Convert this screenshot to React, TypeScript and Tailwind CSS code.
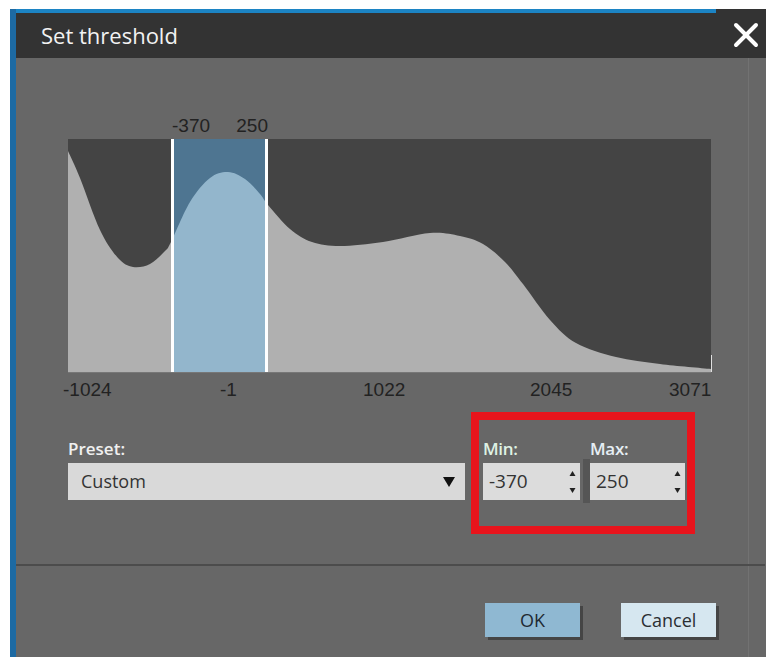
import { X } from 'lucide-react';

type Pt = [number, number];

// histogram outline, in chart pixel coordinates
const curve: Pt[] = [
  [68, 151], [80, 178], [100, 230], [118, 258], [133, 267], [150, 264], [165, 251],
  [171, 242], [190, 202], [210, 178], [228, 172], [245, 179], [260, 194], [268, 205],
  [290, 229], [312, 242], [340, 246], [383, 242], [430, 233], [460, 236], [483, 244],
  [505, 262], [523, 284], [550, 320], [576, 343], [616, 357], [660, 364], [711, 369],
];

const LEFT = 68;
const RIGHT = 711;
const TOP = 139;
const BOTTOM = 372;
const SEL_MIN = 171;
const SEL_MAX = 268;

function smoothPath(pts: Pt[]) {
  let d = `M${pts[0][0]},${pts[0][1]}`;
  for (let i = 0; i < pts.length - 1; i++) {
    const p0 = pts[i - 1] || pts[i];
    const p1 = pts[i];
    const p2 = pts[i + 1];
    const p3 = pts[i + 2] || p2;
    const c1x = p1[0] + (p2[0] - p0[0]) / 6;
    const c1y = p1[1] + (p2[1] - p0[1]) / 6;
    const c2x = p2[0] - (p3[0] - p1[0]) / 6;
    const c2y = p2[1] - (p3[1] - p1[1]) / 6;
    d += ` C${c1x},${c1y} ${c2x},${c2y} ${p2[0]},${p2[1]}`;
  }
  return d;
}

const area = `${smoothPath(curve)} L${RIGHT},${BOTTOM} L${LEFT},${BOTTOM} Z`;

const axisLabels = [
  { x: 63, text: '-1024' },
  { x: 220, text: '-1' },
  { x: 363, text: '1022' },
  { x: 530, text: '2045' },
  { x: 669, text: '3071' },
];

function Histogram() {
  return (
    <svg width={660} height={292} viewBox="60 108 660 292" className="block">
      <defs>
        <clipPath id="sel">
          <rect x={SEL_MIN} y={TOP} width={SEL_MAX - SEL_MIN} height={BOTTOM - TOP} />
        </clipPath>
      </defs>
      <rect x={LEFT} y={TOP} width={RIGHT - LEFT} height={BOTTOM - TOP} fill="#444444" />
      <path d={area} fill="#b0b0b0" />
      <rect x={SEL_MIN} y={TOP} width={SEL_MAX - SEL_MIN} height={BOTTOM - TOP} fill="#4e7591" />
      <path d={area} fill="#93b6cc" clipPath="url(#sel)" />
      <line x1={SEL_MIN + 1.5} y1={TOP} x2={SEL_MIN + 1.5} y2={BOTTOM} stroke="#ffffff" strokeWidth={3} />
      <line x1={SEL_MAX - 1.5} y1={TOP} x2={SEL_MAX - 1.5} y2={BOTTOM} stroke="#ffffff" strokeWidth={3} />
      <line x1={LEFT} y1={BOTTOM + 0.5} x2={RIGHT} y2={BOTTOM + 0.5} stroke="#777777" strokeWidth={1} />
      <line x1={RIGHT + 0.5} y1={355} x2={RIGHT + 0.5} y2={BOTTOM} stroke="#e0e0e0" strokeWidth={1} />

      <g fontFamily="'Liberation Sans', Arial, sans-serif" fontSize={19} fill="#222222">
        <text x={SEL_MIN + 1} y={132}>-370</text>
        <text x={SEL_MAX} y={132} textAnchor="end">250</text>
        {axisLabels.map(l => (
          <text key={l.text} x={l.x} y={396}>{l.text}</text>
        ))}
      </g>
    </svg>
  );
}

function Spinner() {
  return (
    <svg width={7} height={24} viewBox="0 0 7 24" className="shrink-0">
      <path d="M3.5 1 L6.5 6 L0.5 6 Z" fill="#222" />
      <path d="M0.5 18 L6.5 18 L3.5 23 Z" fill="#222" />
    </svg>
  );
}

function NumberBox({ value, width }: { value: string; width: string }) {
  return (
    <div className={`${width} h-[37px] bg-[#dcdcdc] flex items-center justify-between pl-[6px] pr-[4px]`}>
      <span className="text-[19px] text-[#333]">{value}</span>
      <Spinner />
    </div>
  );
}

export default function App() {
  return (
    <div
      className="w-[766px] h-[657px] bg-white pl-[10px] pt-[9px] overflow-hidden"
      style={{ fontFamily: "'Open Sans', 'Noto Sans', sans-serif" }}
    >
      <div className="flex h-full flex-col border-l-[6px] border-[#1d6aa3] bg-[#676767]">
        {/* title bar */}
        <div className="flex h-[49px] shrink-0">
          <div className="flex flex-1 items-center border-t-4 border-[#1c84c4] bg-[#333333] pl-[25px]">
            <span className="text-[22px] font-medium text-[#f2f2f2]">Set threshold</span>
          </div>
          <div className="w-[50px] bg-[#333333] flex items-center pl-[14px] pt-[3px]">
            <X className="w-[40px] h-[40px] -ml-[4px] text-white" strokeWidth={2.4} />
          </div>
        </div>

        {/* body */}
        <div className="flex flex-1 flex-col border-r border-[#727272] mr-[17px]">
          <div className="mt-[50px] ml-[44px]">
            <Histogram />
          </div>

          <div className="mt-[12px] ml-[52px] flex items-start">
            <div className="mt-[27px] flex flex-col">
              <span className="text-[17px] font-semibold text-[#f0f0f0] leading-[20px]">Preset:</span>
              <div className="mt-[4px] w-[397px] h-[37px] bg-[#d9d9d9] flex items-center justify-between pl-[13px] pr-[10px]">
                <span className="text-[18px] text-[#333]">Custom</span>
                <svg width={12} height={10} viewBox="0 0 12 10">
                  <path d="M0 0 L12 0 L6 10 Z" fill="#111" />
                </svg>
              </div>
            </div>

            <div className="ml-[6px] w-[224px] h-[122px] border-[8px] border-[#e8141c] pl-[4px] pt-[19px]">
              <div className="flex">
                <div className="flex flex-col">
                  <span className="text-[17px] font-semibold text-[#dff2e4] leading-[20px] tracking-[-0.3px]">Min:</span>
                  <div className="mt-[4px]">
                    <NumberBox value="-370" width="w-[97px]" />
                  </div>
                </div>
                <div className="mt-[20px] ml-[3px] w-[7px] h-[44px] bg-[#555555]" />
                <div className="flex flex-col">
                  <span className="text-[17px] font-semibold text-[#e6eef4] leading-[20px] tracking-[-0.3px]">Max:</span>
                  <div className="mt-[4px]">
                    <NumberBox value="250" width="w-[95px]" />
                  </div>
                </div>
              </div>
            </div>
          </div>

          <div className="mt-[30px] -mr-[17px] h-[2px] bg-[#4c4c4c]" />

          <div className="mt-[37px] ml-[469px] flex gap-[41px]">
            <button className="w-[95px] h-[34px] bg-[#8fb8d2] text-[18px] text-[#1f2a33] shadow-[3px_3px_0_#454545]">
              OK
            </button>
            <button className="w-[95px] h-[34px] bg-[#d6e7f0] text-[18px] text-[#2a2f33] shadow-[3px_3px_0_#454545]">
              Cancel
            </button>
          </div>
        </div>
      </div>
    </div>
  );
}
